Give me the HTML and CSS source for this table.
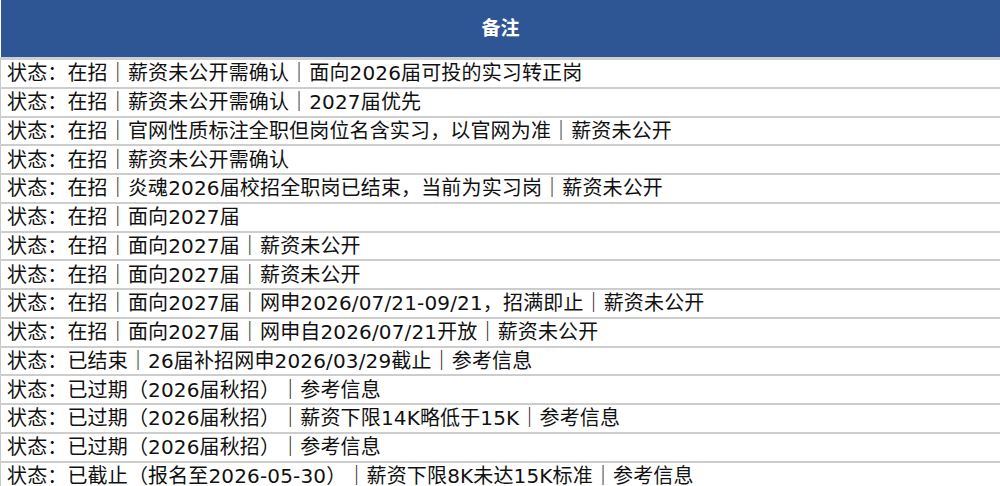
FILE: index.html
```html
<!DOCTYPE html>
<html lang="zh-CN">
<head>
<meta charset="utf-8">
<title>备注</title>
<link rel="stylesheet" href="styles.css">
</head>
<body>
<table class="notes">
  <thead>
    <tr><th class="head">备注</th></tr>
  </thead>
  <tbody>
    <tr><td>状态：在招｜薪资未公开需确认｜面向2026届可投的实习转正岗</td></tr>
    <tr><td>状态：在招｜薪资未公开需确认｜2027届优先</td></tr>
    <tr><td>状态：在招｜官网性质标注全职但岗位名含实习，以官网为准｜薪资未公开</td></tr>
    <tr><td>状态：在招｜薪资未公开需确认</td></tr>
    <tr><td>状态：在招｜炎魂2026届校招全职岗已结束，当前为实习岗｜薪资未公开</td></tr>
    <tr><td>状态：在招｜面向2027届</td></tr>
    <tr><td>状态：在招｜面向2027届｜薪资未公开</td></tr>
    <tr><td>状态：在招｜面向2027届｜薪资未公开</td></tr>
    <tr><td>状态：在招｜面向2027届｜网申2026/07/21-09/21，招满即止｜薪资未公开</td></tr>
    <tr><td>状态：在招｜面向2027届｜网申自2026/07/21开放｜薪资未公开</td></tr>
    <tr><td>状态：已结束｜26届补招网申2026/03/29截止｜参考信息</td></tr>
    <tr><td>状态：已过期（2026届秋招）｜参考信息</td></tr>
    <tr><td>状态：已过期（2026届秋招）｜薪资下限14K略低于15K｜参考信息</td></tr>
    <tr><td>状态：已过期（2026届秋招）｜参考信息</td></tr>
    <tr><td>状态：已截止（报名至2026-05-30）｜薪资下限8K未达15K标准｜参考信息</td></tr>
  </tbody>
</table>
</body>
</html>
```

FILE: styles.css
```css
html, body {
  margin: 0;
  padding: 0;
  background: #ffffff;
}

body {
  width: 1000px;
  height: 486px;
  overflow: hidden;
  font-family: "DejaVu Sans", "Noto Sans CJK SC", sans-serif;
}

.notes {
  width: 1000px;
  border-collapse: collapse;
  table-layout: fixed;
}

.head {
  height: 52px;
  padding: 0 0 5px 0;
  background: #2e5594;
  color: #ffffff;
  font-family: "Noto Sans CJK SC", sans-serif;
  font-size: 19px;
  font-weight: 700;
  text-align: center;
  vertical-align: middle;
  border-left: 1px solid #ffffff;
  border-bottom: 3px solid #cfcfcf;
}

.notes td {
  height: 26.75px;
  padding: 0 0 0 6px;
  font-size: 20px;
  line-height: 24px;
  letter-spacing: 0.15px;
  color: #111111;
  white-space: nowrap;
  vertical-align: middle;
  border-left: 1px solid #c8c8c8;
  border-bottom: 2px solid #cdcdcd;
}
```
